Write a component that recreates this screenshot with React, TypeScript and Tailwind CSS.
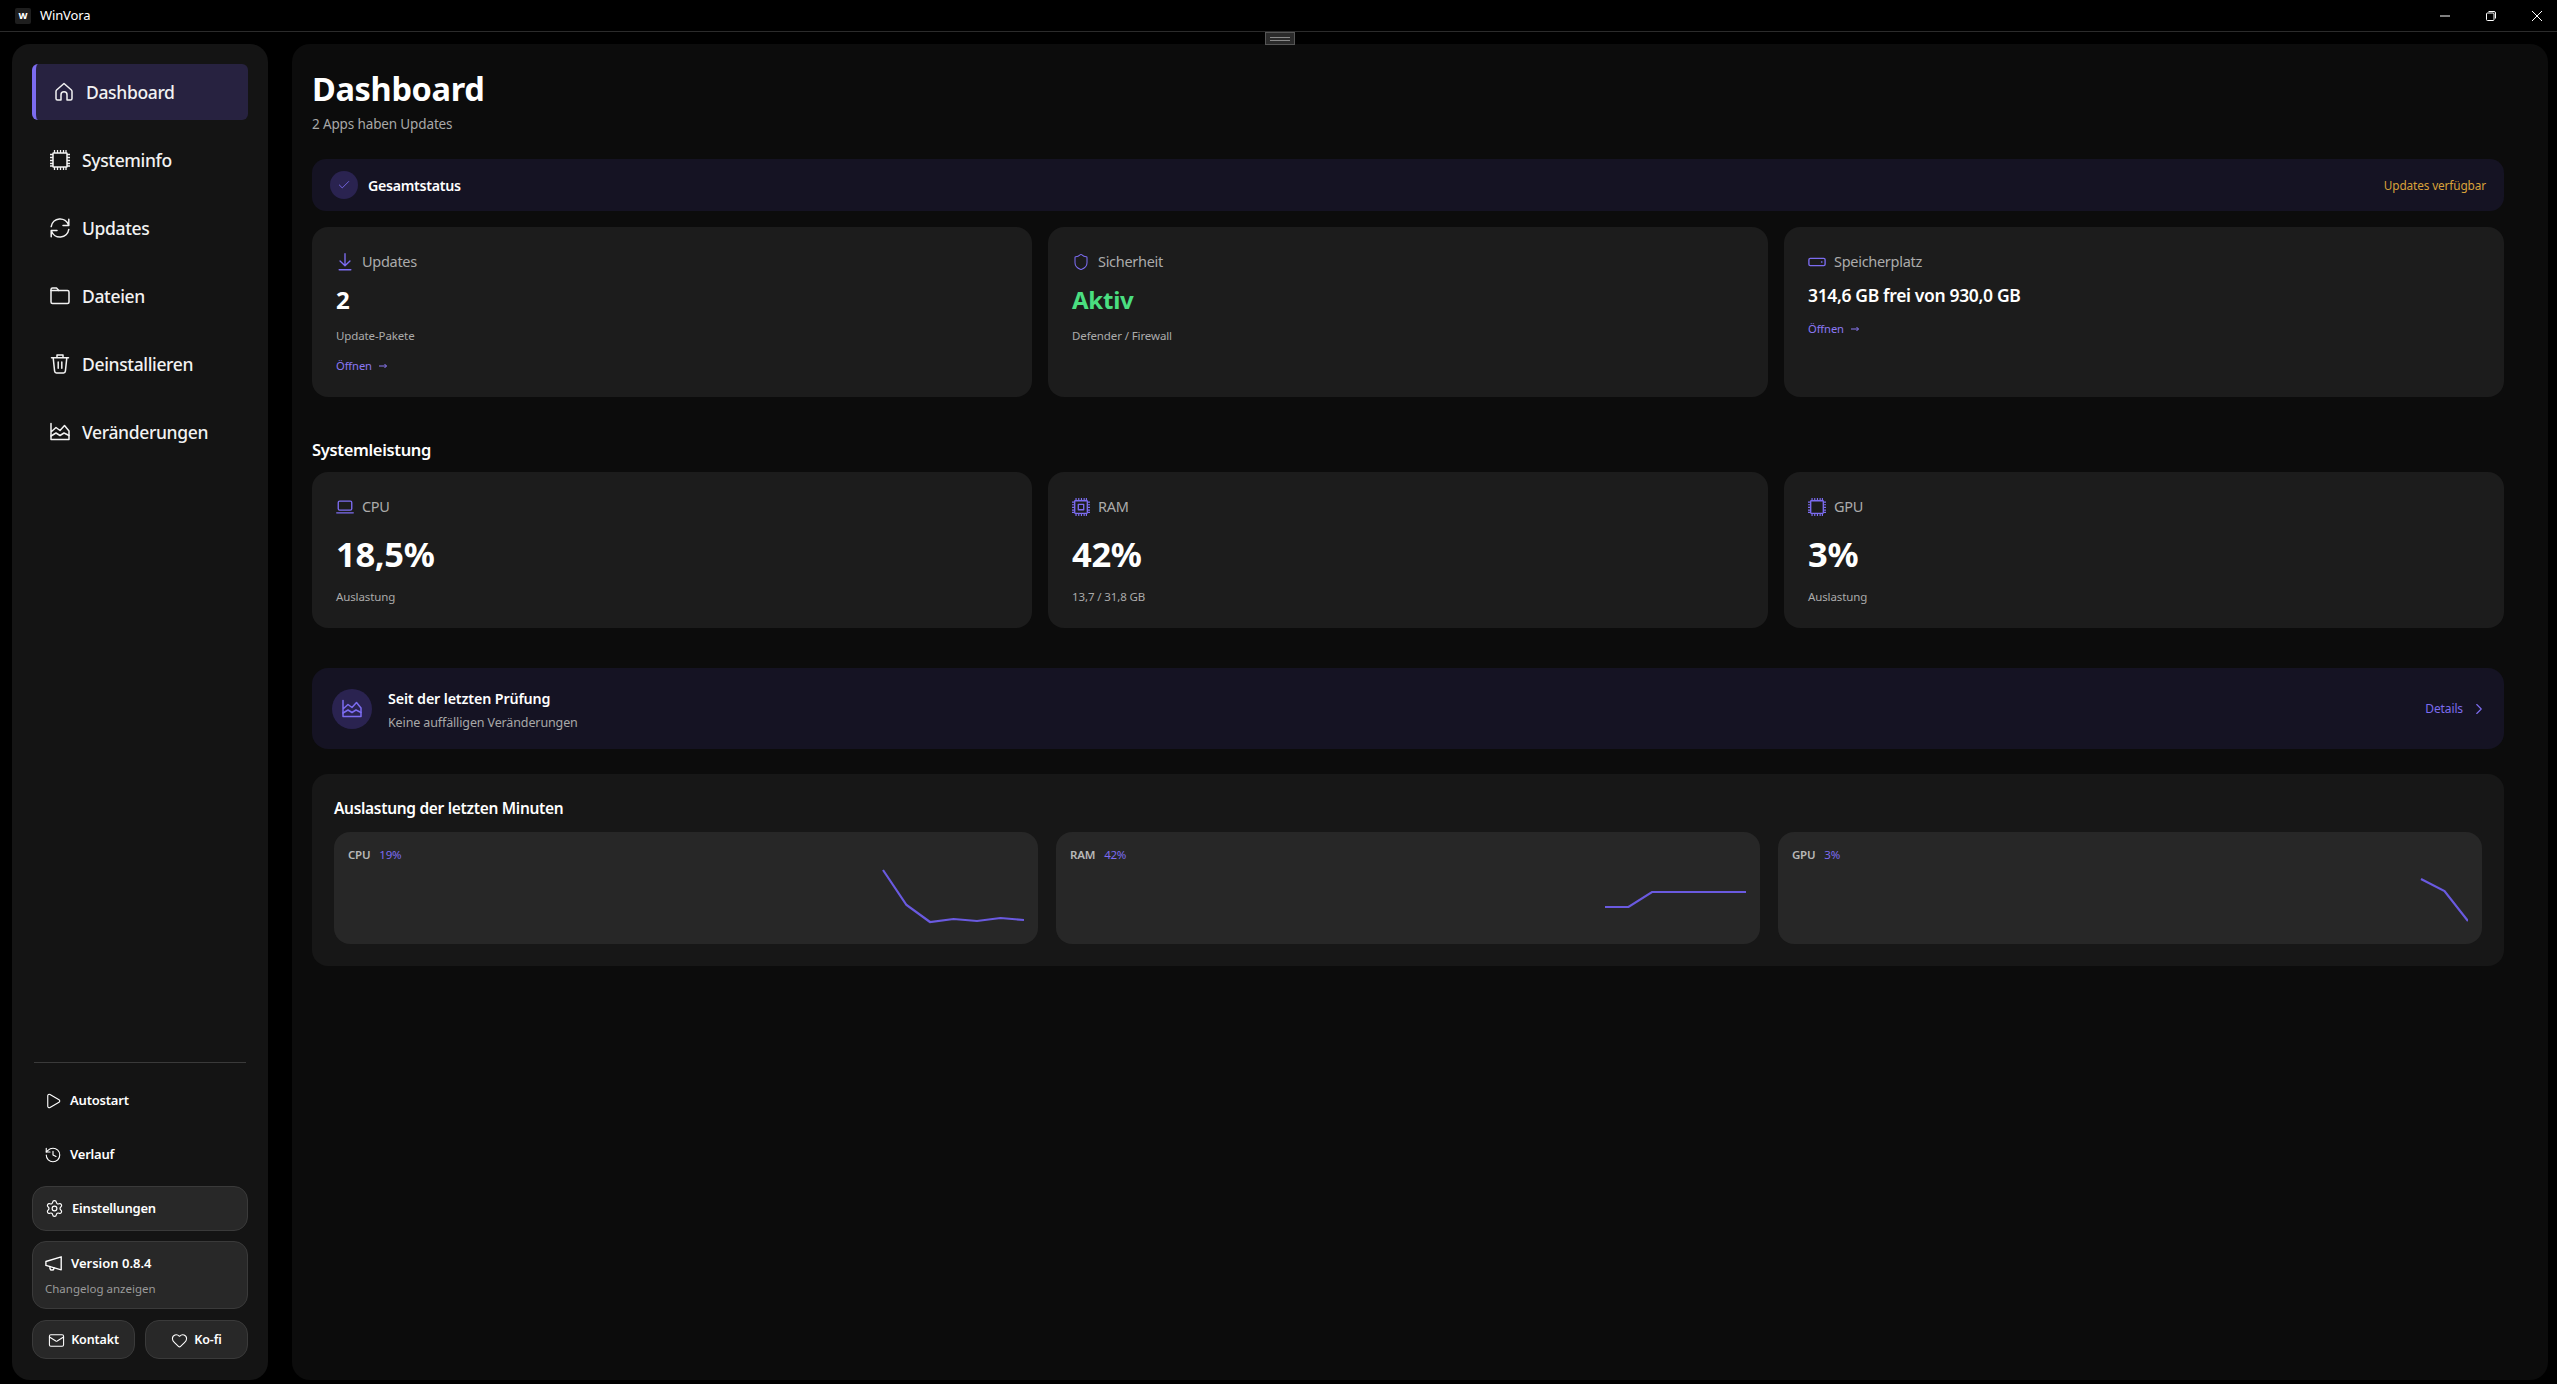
import type { ReactNode } from "react";
import { Check, ChevronRight, Heart, History, Mail, Play, Settings, Shield } from "lucide-react";

const accent = "#7c6cf0";

type IconProps = { className?: string };

function Svg({ className, children, box = 20 }: IconProps & { children: ReactNode; box?: number }) {
  return (
    <svg
      viewBox={`0 0 ${box} ${box}`}
      fill="none"
      stroke="currentColor"
      strokeWidth="1.5"
      strokeLinecap="round"
      strokeLinejoin="round"
      className={className}
    >
      {children}
    </svg>
  );
}

function HomeIcon({ className }: IconProps) {
  return (
    <Svg className={className}>
      <path d="M10 1.5 2.6 8Q2 8.6 2 9.4V16.5Q2 18 3.5 18H7V12.8A3 3 0 0 1 13 12.8V18H16.5Q18 18 18 16.5V9.4Q18 8.6 17.4 8Z" />
    </Svg>
  );
}

function ChipIcon({ className, inner }: IconProps & { inner?: boolean }) {
  return (
    <Svg className={className}>
      <rect x="3" y="3" width="14" height="14" rx="0.5" />
      {inner ? <rect x="7" y="7" width="6" height="6" /> : null}
      <path
        d="M4.5 0v3M7.5 0v3M10.5 0v3M13.5 0v3M16 0v3M4.5 17v3M7.5 17v3M10.5 17v3M13.5 17v3M16 17v3M0 4.5h3M0 7.5h3M0 10.5h3M0 13.5h3M0 16h3M17 4.5h3M17 7.5h3M17 10.5h3M17 13.5h3M17 16h3"
        strokeWidth="1.3"
        strokeLinecap="butt"
      />
    </Svg>
  );
}

function RefreshIcon({ className }: IconProps) {
  return (
    <Svg className={className}>
      <path d="M1.2 8.6A9 9 0 0 1 18.6 7M18.8 1.2V7.4H13" />
      <path d="M18.8 11.4A9 9 0 0 1 1.4 13M1.2 18.8V12.6H7" />
    </Svg>
  );
}

function FolderIcon({ className }: IconProps) {
  return (
    <Svg className={className}>
      <path d="M1 3.5Q1 2 2.5 2H6.5L8.8 4.6H17.5Q19 4.6 19 6.1V16Q19 17.5 17.5 17.5H2.5Q1 17.5 1 16Z" />
      <path d="M1 4.6H8.8" />
    </Svg>
  );
}

function TrashIcon({ className }: IconProps) {
  return (
    <Svg className={className}>
      <path d="M1.5 3.8H18.5M7 3.8V1H13V3.8M3.2 3.8 4.6 17.2Q4.8 19 6.4 19H13.6Q15.2 19 15.4 17.2L16.8 3.8M8.2 8V14.2M11.8 8V14.2" />
    </Svg>
  );
}

function AreaIcon({ className }: IconProps) {
  return (
    <Svg className={className}>
      <path d="M1 1.5V17.5H19V9L14.5 3.5 10 8.5 6 5.5 1 10" />
      <path d="M1 14 6 11 10 13.5 14 11 19 13.5" />
    </Svg>
  );
}

function DownloadIcon({ className }: IconProps) {
  return (
    <Svg className={className}>
      <path d="M10 .8V14M4.5 8.8 10 14.2 15.5 8.8M3.5 18.6H16.5" />
    </Svg>
  );
}

function DriveIcon({ className }: IconProps) {
  return (
    <Svg className={className}>
      <rect x="1" y="6" width="18" height="8" rx="1.5" />
      <path d="M15 10h.5" />
    </Svg>
  );
}

function LaptopIcon({ className }: IconProps) {
  return (
    <Svg className={className}>
      <rect x="2.5" y="3.5" width="15" height="10" rx="1.5" />
      <path d="M.8 16.5H19.2" />
    </Svg>
  );
}

function MegaphoneIcon({ className }: IconProps) {
  return (
    <Svg className={className}>
      <path d="M1 7.2 18 2V16.5L1 11.6Z" />
      <path d="M5.5 12.8V15A2.3 2.3 0 0 0 10 15V14.2" />
    </Svg>
  );
}

const navItems = [
  { label: "Systeminfo", icon: <ChipIcon className="h-5 w-5" /> },
  { label: "Updates", icon: <RefreshIcon className="h-5 w-5" /> },
  { label: "Dateien", icon: <FolderIcon className="h-5 w-5" /> },
  { label: "Deinstallieren", icon: <TrashIcon className="h-5 w-5" /> },
  { label: "Veränderungen", icon: <AreaIcon className="h-5 w-5" /> },
];

function TitleBar() {
  return (
    <div className="flex h-8 shrink-0 items-center border-b border-[#2b2b2b] bg-black pl-[15px] pr-[15px] text-white">
      <span className="flex h-4 w-4 items-center justify-center rounded-[2px] bg-[#1e1e1e] text-[9px] leading-none font-extrabold">
        W
      </span>
      <span className="ml-[9px] text-[13px] tracking-[-0.01em]">WinVora</span>
      <div className="ml-auto flex items-center gap-[36px]">
        <svg viewBox="0 0 10 10" className="h-[10px] w-[10px]" stroke="currentColor" fill="none">
          <path d="M0 5H10" />
        </svg>
        <svg viewBox="0 0 10 10" className="h-[10px] w-[10px]" stroke="currentColor" fill="none">
          <rect x=".5" y="2" width="7.5" height="7.5" rx="1" />
          <path d="M2.5 .5H8Q9.5 .5 9.5 2V7.5" />
        </svg>
        <svg viewBox="0 0 10 10" className="h-[10px] w-[10px]" stroke="currentColor" fill="none">
          <path d="M0 0 10 10M10 0 0 10" />
        </svg>
      </div>
    </div>
  );
}

function Sidebar() {
  return (
    <aside className="flex w-[256px] shrink-0 flex-col rounded-[18px] bg-[#141414] px-5 pt-5 pb-[21px] text-white">
      <nav className="flex flex-col gap-3">
        <div className="flex h-14 items-center gap-3 rounded-md border-l-4 border-[#7c6cf0] bg-[#272240] pl-[18px] text-[#f2f2f2]">
          <HomeIcon className="h-5 w-5" />
          <span className="pt-px text-[17.5px] font-medium tracking-[-0.02em]">Dashboard</span>
        </div>
        {navItems.map((item) => (
          <div key={item.label} className="flex h-14 items-center gap-3 pl-[18px] text-[#f2f2f2]">
            {item.icon}
            <span className="pt-px text-[17.5px] font-medium tracking-[-0.02em]">{item.label}</span>
          </div>
        ))}
      </nav>

      <div className="mt-auto flex flex-col">
        <div className="mx-0.5 mb-[11px] h-px bg-[#3a3a3a]" />
        <div className="flex h-[54px] items-center gap-2 pl-3 text-[13px] font-semibold tracking-[-0.015em]">
          <Play className="h-[18px] w-[18px]" strokeWidth={1.5} />
          Autostart
        </div>
        <div className="flex h-[54px] items-center gap-2 pl-3 text-[13px] font-semibold tracking-[-0.015em]">
          <History className="h-[18px] w-[18px]" strokeWidth={1.5} />
          Verlauf
        </div>
        <div className="mt-[4px] flex h-[45px] items-center gap-2 rounded-[14px] border border-[#3a3a3a] bg-[#282828] pl-3 text-[13px] font-semibold tracking-[-0.015em]">
          <Settings className="h-[19px] w-[19px]" strokeWidth={1.5} />
          Einstellungen
        </div>
        <div className="mt-[10px] h-[68px] rounded-[14px] border border-[#3a3a3a] bg-[#282828] pt-[12px] pl-3">
          <div className="flex items-center gap-2 text-[13px] font-semibold">
            <MegaphoneIcon className="h-[18px] w-[18px]" />
            Version 0.8.4
          </div>
          <div className="mt-[7px] text-[11.5px] leading-4 text-[#9a9a9a]">Changelog anzeigen</div>
        </div>
        <div className="mt-[11px] flex gap-[10px]">
          <div className="flex h-[39px] flex-1 items-center justify-center gap-[6px] rounded-[14px] border border-[#3a3a3a] bg-[#282828] pt-[2px] text-[12.5px] font-semibold tracking-[-0.01em]">
            <Mail className="h-[17px] w-[17px]" strokeWidth={1.5} />
            Kontakt
          </div>
          <div className="flex h-[39px] flex-1 items-center justify-center gap-[6px] rounded-[14px] border border-[#3a3a3a] bg-[#282828] pt-[2px] text-[12.5px] font-semibold tracking-[-0.01em]">
            <Heart className="h-[17px] w-[17px]" strokeWidth={1.5} />
            Ko-fi
          </div>
        </div>
      </div>
    </aside>
  );
}

function CardLabel({ icon, label }: { icon: ReactNode; label: string }) {
  return (
    <div className="flex h-6 items-center gap-[8px] text-[14.5px] tracking-[-0.02em] text-[#ababab]">
      <span className="flex w-[18px] justify-center text-[#7c6cf0]">{icon}</span>
      {label}
    </div>
  );
}

function OpenLink() {
  return (
    <div className="mt-[14px] flex h-4 items-center gap-[7px] text-[11.2px] tracking-[-0.01em] text-[#8b78f5]">
      Öffnen
      <svg viewBox="0 0 8 8" className="h-2 w-2" fill="none" stroke="currentColor" strokeWidth="1">
        <path d="M0 4H7.5M5.5 2 7.5 4 5.5 6" />
      </svg>
    </div>
  );
}

function PerfCard({ icon, label, value, note }: { icon: ReactNode; label: string; value: string; note: string }) {
  return (
    <div className="h-[156px] rounded-2xl bg-[#1c1c1c] px-6 pt-[23px]">
      <CardLabel icon={icon} label={label} />
      <div className="mt-[13px] h-11 text-[34.5px] leading-[44px] font-bold tracking-[-0.01em] text-white">{value}</div>
      <div className="mt-[13px] h-4 text-[11.5px] leading-4 tracking-[-0.01em] text-[#ababab]">{note}</div>
    </div>
  );
}

function Spark({ label, value, points }: { label: string; value: string; points: string }) {
  return (
    <div className="h-[112px] rounded-2xl bg-[#272727] px-[14px] pt-4">
      <div className="flex h-[14px] items-center gap-[9px] text-[11.5px] leading-[14px] tracking-[-0.02em]">
        <span className="font-semibold text-[#b8b8b8]">{label}</span>
        <span className="text-[#7c6cf0]">{value}</span>
      </div>
      <svg viewBox="0 0 676 64" className="mt-[3px] h-16 w-full">
        <polyline points={points} fill="none" stroke="#6a5ae0" strokeWidth="2.2" />
      </svg>
    </div>
  );
}

export default function App() {
  return (
    <div
      className="flex h-screen flex-col overflow-hidden bg-black"
      style={{ fontFamily: '"Noto Sans", "Open Sans", sans-serif' }}
    >
      <TitleBar />
      <div className="absolute top-8 left-[1265px] flex h-[13px] w-[30px] flex-col items-center justify-center gap-[2px] border border-[#555] bg-[#2a2a2a]">
        <span className="h-px w-5 bg-[#888]" />
        <span className="h-px w-5 bg-[#888]" />
      </div>

      <div className="flex min-h-0 flex-1 gap-6 pt-3 pr-[9px] pb-1 pl-3">
        <Sidebar />

        <main className="min-w-0 flex-1 rounded-[18px] bg-[#0c0c0c] pt-[23px] pr-[44px] pl-5">
          <h1 className="h-11 text-[32.5px] leading-[44px] font-bold tracking-[-0.01em] text-white">Dashboard</h1>
          <p className="mt-[3px] h-5 text-[13.5px] leading-5 tracking-[-0.01em] text-[#a8a8a8]">2 Apps haben Updates</p>

          <div className="mt-[25px] flex h-[52px] items-center rounded-[14px] bg-[#151323] pr-[18px] pl-[18px]">
            <span className="flex h-7 w-7 items-center justify-center rounded-full bg-[#2a2350] text-[#7c6cf0]">
              <Check className="h-[14px] w-[14px]" strokeWidth={1.5} />
            </span>
            <span className="ml-[10px] pt-px text-[14.2px] font-semibold tracking-[-0.02em] text-white">Gesamtstatus</span>
            <span className="ml-auto pt-px text-[11.8px] tracking-[-0.01em] text-[#d9a23a]">Updates verfügbar</span>
          </div>

          <div className="mt-4 grid grid-cols-3 gap-4">
            <div className="h-[170px] rounded-2xl bg-[#1c1c1c] px-6 pt-[23px]">
              <CardLabel icon={<DownloadIcon className="h-5 w-5" />} label="Updates" />
              <div className="mt-[10px] h-8 text-[24px] leading-8 font-bold text-white">2</div>
              <div className="mt-3 h-4 text-[11.5px] leading-4 tracking-[-0.01em] text-[#ababab]">Update-Pakete</div>
              <OpenLink />
            </div>
            <div className="h-[170px] rounded-2xl bg-[#1c1c1c] px-6 pt-[23px]">
              <CardLabel icon={<Shield className="h-5 w-5" strokeWidth={1.4} />} label="Sicherheit" />
              <div className="mt-[10px] h-8 text-[24px] leading-8 font-bold tracking-[-0.01em] text-[#4ade80]">Aktiv</div>
              <div className="mt-3 h-4 text-[11.5px] leading-4 tracking-[-0.01em] text-[#ababab]">Defender / Firewall</div>
            </div>
            <div className="h-[170px] rounded-2xl bg-[#1c1c1c] px-6 pt-[23px]">
              <CardLabel icon={<DriveIcon className="h-5 w-5" />} label="Speicherplatz" />
              <div className="mt-[9px] mb-px h-6 text-[17.5px] leading-6 font-semibold tracking-[-0.02em] text-white">
                314,6 GB frei von 930,0 GB
              </div>
              <OpenLink />
            </div>
          </div>

          <h2 className="mt-[41px] h-6 text-[16.5px] leading-6 font-semibold tracking-[-0.02em] text-white">Systemleistung</h2>

          <div className="mt-[10px] grid grid-cols-3 gap-4">
            <PerfCard icon={<LaptopIcon className="h-5 w-5" />} label="CPU" value="18,5%" note="Auslastung" />
            <PerfCard icon={<ChipIcon inner className="h-5 w-5" />} label="RAM" value="42%" note="13,7 / 31,8 GB" />
            <PerfCard icon={<ChipIcon className="h-5 w-5" />} label="GPU" value="3%" note="Auslastung" />
          </div>

          <div className="mt-10 flex h-[81px] items-center rounded-2xl bg-[#151323] pr-4 pl-5">
            <span className="flex h-10 w-10 items-center justify-center rounded-full bg-[#2a2350] text-[#7c6cf0]">
              <AreaIcon className="h-5 w-5" />
            </span>
            <div className="ml-4 pt-[3px]">
              <div className="h-[25px] text-[14.3px] leading-[22px] font-semibold tracking-[-0.01em] text-white">Seit der letzten Prüfung</div>
              <div className="h-5 text-[12.5px] leading-5 tracking-[-0.01em] text-[#a8a8a8]">Keine auffälligen Veränderungen</div>
            </div>
            <div className="ml-auto flex items-center gap-[7px] pt-px text-[12px] tracking-[-0.01em]" style={{ color: accent }}>
              Details
              <ChevronRight className="h-[18px] w-[18px]" strokeWidth={1.5} />
            </div>
          </div>

          <section className="mt-[25px] h-[192px] rounded-2xl bg-[#171717] px-[22px] pt-[22px]">
            <h3 className="h-6 text-[15.5px] leading-6 font-semibold tracking-[-0.02em] text-white">Auslastung der letzten Minuten</h3>
            <div className="mt-[12px] grid grid-cols-3 gap-[18px]">
              <Spark label="CPU" value="19%" points="535,5 558.5,40 582,57 605.5,54 629,56 652.5,53 676,55" />
              <Spark label="RAM" value="42%" points="535,42 558.5,42 582,27 605.5,27 629,27 652.5,27 676,27" />
              <Spark label="GPU" value="3%" points="629,14 652.5,26 676,56" />
            </div>
          </section>
        </main>
      </div>
    </div>
  );
}
